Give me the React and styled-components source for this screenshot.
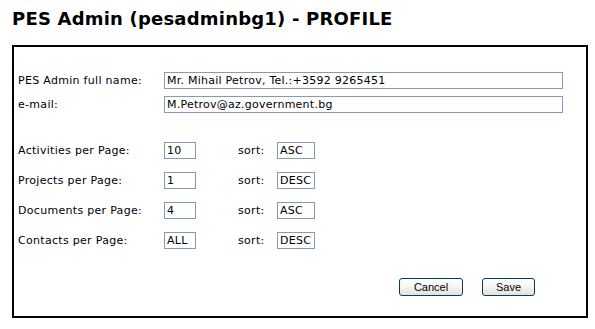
import React from "react";
import styled, { createGlobalStyle } from "styled-components";

const GlobalStyle = createGlobalStyle`
	html, body {
		margin: 0;
		padding: 0;
		background: #ffffff;
	}
	body {
		font-family: "DejaVu Sans", Verdana, sans-serif;
		color: #000000;
	}
`;

const Page = styled.div`
	padding: 8px 8px 0 12px;
	width: 575px;
`;

const Title = styled.h1`
	margin: 0;
	font-family: "DejaVu Sans", Verdana, sans-serif;
	font-size: 18px;
	font-weight: bold;
	line-height: 21px;
	letter-spacing: 0.2px;
	white-space: nowrap;
`;

const ProfileBox = styled.div`
	margin-top: 16px;
	box-sizing: border-box;
	width: 576px;
	border: 2px solid #000000;
	padding: 21px 0 20px 4px;
	display: flex;
	flex-direction: column;
`;

const FormRow = styled.div`
	display: flex;
	align-items: center;
	height: ${p => p.$height || 24}px;
	font-size: 11px;
	letter-spacing: 0.3px;
`;

const FieldLabel = styled.span`
	width: 146px;
	flex: none;
	white-space: nowrap;
`;

const SortLabel = styled.span`
	width: 39px;
	margin-left: 42px;
	flex: none;
`;

const TextInput = styled.input`
	box-sizing: border-box;
	width: ${p => p.$width}px;
	height: 17px;
	margin: 0;
	padding: 0 0 0 2px;
	border: 1px solid #7f9db9;
	font-family: "DejaVu Sans", Verdana, sans-serif;
	font-size: 11px;
	letter-spacing: 0.25px;
	color: #000000;
	background: #ffffff;
	outline: none;
`;

const Spacer = styled.div`
	height: ${p => p.$size}px;
	flex: none;
`;

const Actions = styled.div`
	display: flex;
	justify-content: flex-end;
	gap: 19px;
	padding-right: 51px;
	margin-top: 23px;
`;

const ActionButton = styled.button`
	box-sizing: border-box;
	width: ${p => p.$width}px;
	height: 18px;
	margin: 0;
	padding: 0;
	border: 1px solid #003c74;
	border-radius: 3px;
	background: linear-gradient(#ffffff 0%, #f4f4f0 50%, #e3e2da 100%);
	font-family: "Liberation Sans", Arial, sans-serif;
	font-size: 11px;
	color: #000000;
	line-height: 16px;
`;

const settings = [
	{ label: "Activities per Page:", count: "10", sort: "ASC" },
	{ label: "Projects per Page:", count: "1", sort: "DESC" },
	{ label: "Documents per Page:", count: "4", sort: "ASC" },
	{ label: "Contacts per Page:", count: "ALL", sort: "DESC" }
];

export default function App() {
	return (
		<Page>
			<GlobalStyle />
			<Title>{`PES Admin (pesadminbg1) - PROFILE`}</Title>
			<ProfileBox>
				<FormRow>
					<FieldLabel>{`PES Admin full name:`}</FieldLabel>
					<TextInput $width={399} defaultValue="Mr. Mihail Petrov, Tel.:+3592 9265451" />
				</FormRow>
				<FormRow>
					<FieldLabel>{`e-mail:`}</FieldLabel>
					<TextInput $width={399} defaultValue="M.Petrov@az.government.bg" />
				</FormRow>
				<Spacer $size={19} />
				{settings.map(item => (
					<FormRow key={item.label} $height={30}>
						<FieldLabel>{item.label}</FieldLabel>
						<TextInput $width={32} defaultValue={item.count} />
						<SortLabel>{`sort:`}</SortLabel>
						<TextInput $width={38} defaultValue={item.sort} />
					</FormRow>
				))}
				<Actions>
					<ActionButton $width={64}>{`Cancel`}</ActionButton>
					<ActionButton $width={53}>{`Save`}</ActionButton>
				</Actions>
			</ProfileBox>
		</Page>
	);
}
